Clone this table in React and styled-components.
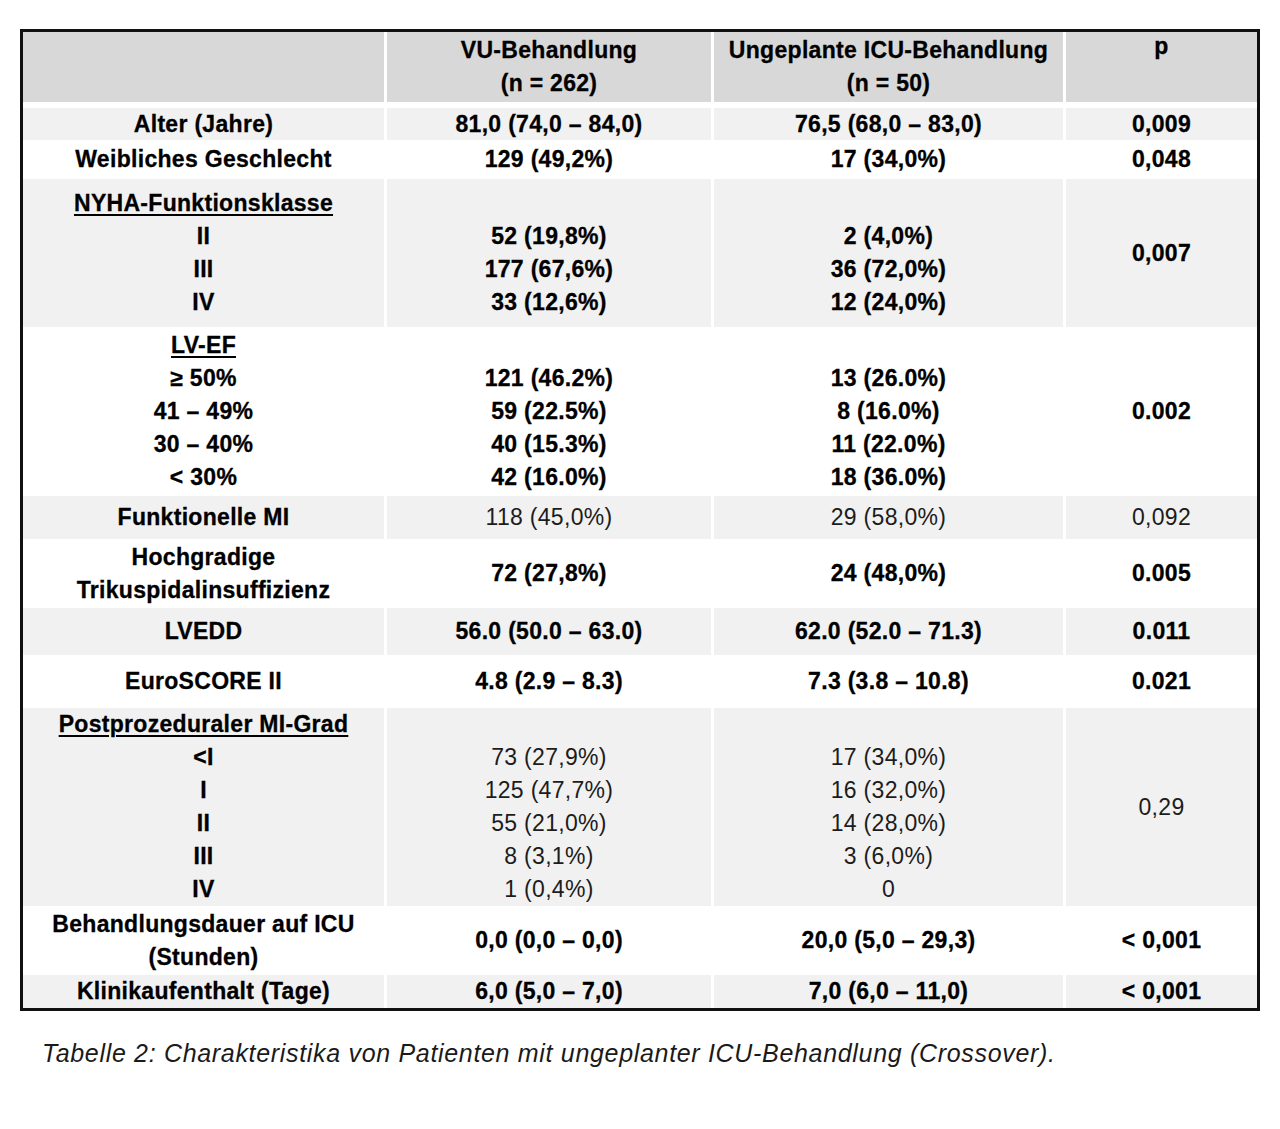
import React from 'react';
import styled, { createGlobalStyle } from 'styled-components';

const GlobalStyle = createGlobalStyle`
    html, body {
        margin: 0;
        padding: 0;
        background: #ffffff;
    }
    body {
        font-family: "Liberation Sans", Arial, sans-serif;
        color: #000;
    }
`

const rows = [
    { tone: 'gray', h: 32, cells: [['Alter (Jahre)'], ['81,0 (74,0 – 84,0)'], ['76,5 (68,0 – 83,0)'], ['0,009']] },
    { tone: 'white', h: 39, cells: [['Weibliches Geschlecht'], ['129 (49,2%)'], ['17 (34,0%)'], ['0,048']] },
    {
        tone: 'gray', h: 148, heading: true,
        cells: [
            ['NYHA-Funktionsklasse', 'II', 'III', 'IV'],
            ['', '52 (19,8%)', '177 (67,6%)', '33 (12,6%)'],
            ['', '2 (4,0%)', '36 (72,0%)', '12 (24,0%)'],
            ['0,007'],
        ],
    },
    {
        tone: 'white', h: 169, heading: true,
        cells: [
            ['LV-EF', '≥ 50%', '41 – 49%', '30 – 40%', '< 30%'],
            ['', '121 (46.2%)', '59 (22.5%)', '40 (15.3%)', '42 (16.0%)'],
            ['', '13 (26.0%)', '8 (16.0%)', '11 (22.0%)', '18 (36.0%)'],
            ['0.002'],
        ],
    },
    { tone: 'gray', h: 43, plain: true, cells: [['Funktionelle MI'], ['118 (45,0%)'], ['29 (58,0%)'], ['0,092']] },
    { tone: 'white', h: 69, cells: [['Hochgradige', 'Trikuspidalinsuffizienz'], ['72 (27,8%)'], ['24 (48,0%)'], ['0.005']] },
    { tone: 'gray', h: 47, cells: [['LVEDD'], ['56.0 (50.0 – 63.0)'], ['62.0 (52.0 – 71.3)'], ['0.011']] },
    { tone: 'white', h: 53, cells: [['EuroSCORE II'], ['4.8 (2.9 – 8.3)'], ['7.3 (3.8 – 10.8)'], ['0.021']] },
    {
        tone: 'gray', h: 198, heading: true, plain: true,
        cells: [
            ['Postprozeduraler MI-Grad', '<I', 'I', 'II', 'III', 'IV'],
            ['', '73 (27,9%)', '125 (47,7%)', '55 (21,0%)', '8 (3,1%)', '1 (0,4%)'],
            ['', '17 (34,0%)', '16 (32,0%)', '14 (28,0%)', '3 (6,0%)', '0'],
            ['0,29'],
        ],
    },
    { tone: 'white', h: 69, cells: [['Behandlungsdauer auf ICU', '(Stunden)'], ['0,0 (0,0 – 0,0)'], ['20,0 (5,0 – 29,3)'], ['< 0,001']] },
    { tone: 'gray', h: 33, cells: [['Klinikaufenthalt (Tage)'], ['6,0 (5,0 – 7,0)'], ['7,0 (6,0 – 11,0)'], ['< 0,001']] },
];

function App()
{
    return (
        <Page>
            <GlobalStyle />
            <Table>
                <HeaderRow>
                    <HeadCell />
                    <HeadCell>
                        <Line>VU-Behandlung</Line>
                        <Line>(n = 262)</Line>
                    </HeadCell>
                    <HeadCell>
                        <Line>Ungeplante ICU-Behandlung</Line>
                        <Line>(n = 50)</Line>
                    </HeadCell>
                    <HeadCell>
                        <Line $lift>p</Line>
                    </HeadCell>
                </HeaderRow>
                { rows.map((row, i) => (
                    <Row key={ i } $tone={ row.tone } style={{ height: row.h }}>
                        { row.cells.map((lines, c) => (
                            <Cell key={ c }>
                                { lines.map((text, l) => (
                                    <Line
                                        key={ l }
                                        $under={ row.heading && c === 0 && l === 0 }
                                        $plain={ row.plain && c > 0 }
                                    >
                                        { text || '\u00a0' }
                                    </Line>
                                )) }
                            </Cell>
                        )) }
                    </Row>
                )) }
            </Table>
            <Caption>Tabelle 2: Charakteristika von Patienten mit ungeplanter ICU-Behandlung (Crossover).</Caption>
        </Page>
    )
}

export default App;

const Page = styled.div`
    padding: 29px 0 0 20px;
    width: 1240px;
`

const Table = styled.div`
    display: flex;
    flex-direction: column;
    width: 1240px;
    box-sizing: border-box;
    border: 3px solid #111;
    background: #fff;
`

const Row = styled.div`
    display: grid;
    grid-template-columns: 361px 324px 349px 191px;
    column-gap: 3px;
    background: #fff;

    & > div {
        background: ${ p => p.$tone === 'gray' ? '#f1f1f1' : '#fff' };
    }
`

const HeaderRow = styled(Row)`
    height: 70px;
    margin-bottom: 6px;

    & > div {
        background: #d8d8d8;
    }
`

const Cell = styled.div`
    display: flex;
    flex-direction: column;
    justify-content: center;
    align-items: center;
    text-align: center;
`

const HeadCell = styled(Cell)`
    justify-content: flex-start;
    padding-top: 2px;
`

const Line = styled.div`
    font-family: "Liberation Sans", Arial, sans-serif;
    font-size: 23px;
    line-height: 33px;
    letter-spacing: 0.3px;
    white-space: nowrap;
    font-weight: ${ p => p.$plain ? 400 : 700 };
    color: ${ p => p.$plain ? '#1c1c1c' : '#000' };
    -webkit-text-stroke: ${ p => p.$plain ? '0' : '0.3px #000' };
    text-decoration: ${ p => p.$under ? 'underline' : 'none' };
    text-decoration-thickness: 2px;
    text-underline-offset: 3px;
    margin-top: ${ p => p.$lift ? '-4px' : '0' };
`

const Caption = styled.div`
    margin-top: 27px;
    padding-left: 22px;
    font-family: "Liberation Sans", Arial, sans-serif;
    font-size: 25px;
    line-height: 30px;
    font-style: italic;
    letter-spacing: 0.68px;
    color: #1a1a1a;
    white-space: nowrap;
`
